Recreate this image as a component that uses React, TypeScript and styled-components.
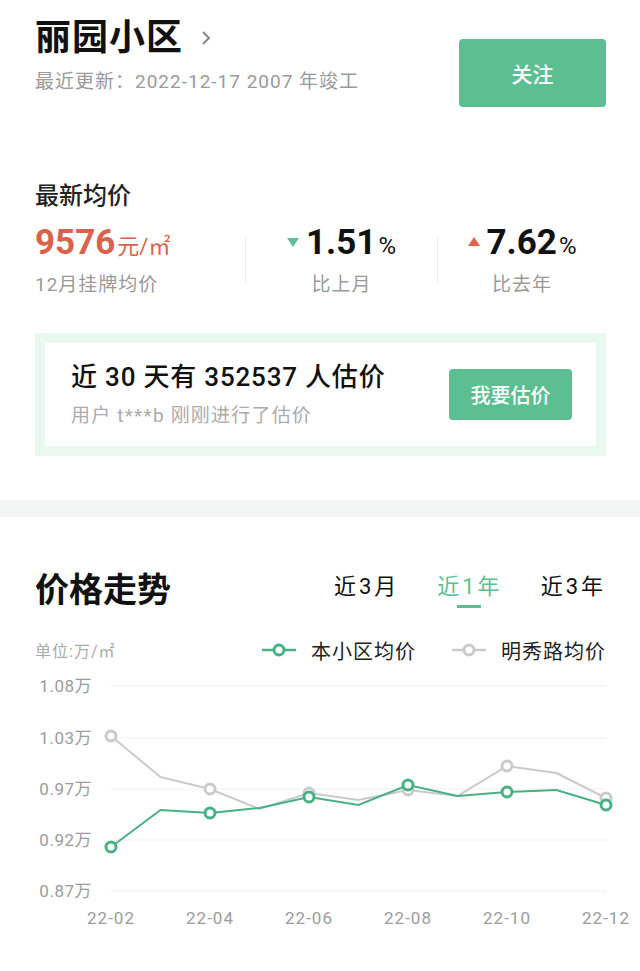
import React from 'react';
import styled, { createGlobalStyle } from 'styled-components';

const GlobalStyle = createGlobalStyle`
    * { box-sizing: border-box; }
    body {
        margin: 0;
        background: #fff;
        font-family: "Roboto", "Noto Sans CJK SC", sans-serif;
        color: #222;
    }
`;

const GREEN = '#5cbf91';
const LINE_GREEN = '#47b183';
const GRAY = '#cacaca';

const Page = styled.div`
    width: 640px;
`;

const TopSection = styled.section`
    padding: 16px 34px 44px 35px;
`;

const HeaderRow = styled.div`
    display: flex;
    justify-content: space-between;
    align-items: flex-start;
`;

const TitleRow = styled.div`
    display: flex;
    align-items: center;
    gap: 18px;
`;

const Title = styled.h1`
    margin: 0;
    font-size: 36px;
    line-height: 44px;
    font-weight: 700;
    color: #111;
    letter-spacing: 1px;
`;

const Updated = styled.div`
    margin-top: 9px;
    font-size: 19px;
    line-height: 26px;
    letter-spacing: 1px;
    color: #9a9a9a;
`;

const FollowButton = styled.button`
    margin-top: 23px;
    width: 147px;
    height: 68px;
    border: none;
    border-radius: 4px;
    background: ${GREEN};
    color: #fff;
    font-family: inherit;
    font-size: 21px;
    font-weight: 500;
`;

const SectionLabel = styled.h2`
    margin: 73px 0 0;
    font-size: 24px;
    line-height: 32px;
    font-weight: 500;
    color: #222;
`;

const StatsRow = styled.div`
    display: flex;
    align-items: center;
    margin-top: 9px;
`;

const Stat = styled.div<{ $width?: number; $center?: boolean }>`
    display: flex;
    flex-direction: column;
    align-items: ${p => (p.$center ? 'center' : 'flex-start')};
    ${p => (p.$width ? `width: ${p.$width}px;` : 'flex: 1;')}
`;

const StatValue = styled.div<{ $color?: string }>`
    display: flex;
    align-items: baseline;
    height: 44px;
    font-size: 35px;
    line-height: 44px;
    font-weight: 700;
    color: ${p => p.$color || '#111'};
`;

const Unit = styled.span<{ $size?: number }>`
    font-size: ${p => p.$size || 22}px;
    font-weight: 400;
    margin-left: 2px;
`;

const StatLabel = styled.div`
    margin-top: 7px;
    font-size: 19px;
    line-height: 26px;
    letter-spacing: 1px;
    color: #9a9a9a;
`;

const Divider = styled.div`
    width: 1px;
    height: 46px;
    background: #eeeeee;
`;

const Triangle = styled.span<{ $up?: boolean }>`
    align-self: center;
    width: 0;
    height: 0;
    margin-right: 7px;
    border-left: 6px solid transparent;
    border-right: 6px solid transparent;
    ${p =>
        p.$up
            ? 'border-bottom: 9px solid #e0654f; margin-top: -4px;'
            : 'border-top: 9px solid #5cc09c; margin-top: -2px;'}
`;

const EstimateCard = styled.div`
    margin-top: 35px;
    height: 123px;
    border: 10px solid #eaf8f2;
    display: flex;
    align-items: center;
    justify-content: space-between;
    padding: 0 24px 0 26px;
`;

const CardTitle = styled.div`
    font-size: 26px;
    line-height: 34px;
    font-weight: 500;
    letter-spacing: 0.8px;
    color: #111;
`;

const CardSub = styled.div`
    margin-top: 9px;
    font-size: 19px;
    line-height: 26px;
    letter-spacing: 1.2px;
    color: #ababab;
`;

const EstimateButton = styled.button`
    width: 123px;
    height: 51px;
    border: none;
    border-radius: 4px;
    background: ${GREEN};
    color: #fff;
    font-family: inherit;
    font-size: 20px;
    font-weight: 500;
`;

const Band = styled.div`
    height: 17px;
    background: #f4f5f5;
`;

const ChartSection = styled.section`
    padding-top: 51px;
`;

const ChartHeader = styled.div`
    display: flex;
    justify-content: space-between;
    align-items: center;
    padding: 0 34px 0 35px;
`;

const ChartTitle = styled.h2`
    margin: 0;
    font-size: 34px;
    line-height: 44px;
    font-weight: 700;
    color: #111;
`;

const Tabs = styled.div`
    display: flex;
    gap: 38px;
    margin-top: -6px;
`;

const Tab = styled.span<{ $active?: boolean }>`
    position: relative;
    font-size: 22px;
    line-height: 30px;
    letter-spacing: 3px;
    color: ${p => (p.$active ? GREEN : '#111')};

    &::after {
        content: '';
        display: ${p => (p.$active ? 'block' : 'none')};
        position: absolute;
        left: 50%;
        bottom: -6px;
        width: 24px;
        height: 3px;
        margin-left: -13px;
        background: ${GREEN};
    }
`;

const LegendRow = styled.div`
    display: flex;
    justify-content: space-between;
    align-items: center;
    margin-top: 24px;
    padding: 0 34px 0 35px;
    height: 28px;
`;

const UnitText = styled.span`
    font-size: 16px;
    letter-spacing: 1px;
    color: #ababab;
`;

const Legend = styled.div`
    display: flex;
    align-items: center;
    gap: 36px;
`;

const LegendItem = styled.div`
    display: flex;
    align-items: center;
    gap: 15px;
    font-size: 20px;
    letter-spacing: 1px;
    color: #222;
`;

const ChartSvg = styled.svg`
    display: block;
    width: 640px;
    height: 307px;
`;

const LegendIcon = ({ color }: { color: string }) => (
    <svg width="34" height="14" viewBox="0 0 34 14">
        <line x1="0" y1="7" x2="34" y2="7" stroke={color} strokeWidth="2.5" />
        <circle cx="17" cy="7" r="5" fill="#fff" stroke={color} strokeWidth="3" />
    </svg>
);

const Chevron = () => (
    <svg width="10" height="16" viewBox="0 0 10 16">
        <polyline points="2,2 8,8 2,14" fill="none" stroke="#888" strokeWidth="2" />
    </svg>
);

// page y minus 664 (chart top)
const OFFSET = 664;
const gridRows = [
    { label: '1.08万', y: 686 },
    { label: '1.03万', y: 738 },
    { label: '0.97万', y: 789 },
    { label: '0.92万', y: 840 },
    { label: '0.87万', y: 891 },
];
const xLabels = ['22-02', '22-04', '22-06', '22-08', '22-10', '22-12'];
const greenSeries = [847, 810, 813, 808, 797, 805, 785, 796, 792, 790, 805];
const graySeries = [736, 777, 789, 809, 793, 800, 790, 796, 766, 773, 798];

const xAt = (i: number) => 111 + i * 49.5;

const Series = ({ data, color }: { data: number[]; color: string }) => (
    <g>
        <polyline
            points={data.map((y, i) => `${xAt(i)},${y - OFFSET}`).join(' ')}
            fill="none"
            stroke={color}
            strokeWidth="2"
        />
        {data.map((y, i) =>
            i % 2 === 0 ? (
                <circle key={i} cx={xAt(i)} cy={y - OFFSET} r="5" fill="#fff" stroke={color} strokeWidth="3" />
            ) : null
        )}
    </g>
);

const PriceChart = () => (
    <ChartSvg viewBox="0 0 640 307">
        {gridRows.map(r => (
            <g key={r.label}>
                <line x1="111" x2="606" y1={r.y - OFFSET} y2={r.y - OFFSET} stroke="#f1f1f1" strokeWidth="1" />
                <text
                    x="92"
                    y={r.y - OFFSET}
                    textAnchor="end"
                    dominantBaseline="central"
                    fontSize="17"
                    letterSpacing="0.5"
                    fill="#9c9c9c"
                >
                    {r.label}
                </text>
            </g>
        ))}
        {xLabels.map((l, i) => (
            <text
                key={l}
                x={xAt(i * 2)}
                y={918 - OFFSET}
                textAnchor="middle"
                dominantBaseline="central"
                fontSize="17"
                letterSpacing="1"
                fill="#9c9c9c"
            >
                {l}
            </text>
        ))}
        <Series data={graySeries} color={GRAY} />
        <Series data={greenSeries} color={LINE_GREEN} />
    </ChartSvg>
);

const App: React.FC = () => {
    return (
        <Page>
            <GlobalStyle />
            <TopSection>
                <HeaderRow>
                    <div>
                        <TitleRow>
                            <Title>丽园小区</Title>
                            <Chevron />
                        </TitleRow>
                        <Updated>最近更新：2022-12-17 2007 年竣工</Updated>
                    </div>
                    <FollowButton>关注</FollowButton>
                </HeaderRow>

                <SectionLabel>最新均价</SectionLabel>
                <StatsRow>
                    <Stat $width={210}>
                        <StatValue $color="#d9624c">
                            9576<Unit>元/㎡</Unit>
                        </StatValue>
                        <StatLabel>12月挂牌均价</StatLabel>
                    </Stat>
                    <Divider />
                    <Stat $width={191} $center>
                        <StatValue>
                            <Triangle />
                            1.51<Unit $size={24}>%</Unit>
                        </StatValue>
                        <StatLabel>比上月</StatLabel>
                    </Stat>
                    <Divider />
                    <Stat $center>
                        <StatValue>
                            <Triangle $up />
                            7.62<Unit $size={24}>%</Unit>
                        </StatValue>
                        <StatLabel>比去年</StatLabel>
                    </Stat>
                </StatsRow>

                <EstimateCard>
                    <div>
                        <CardTitle>近 30 天有 352537 人估价</CardTitle>
                        <CardSub>用户 t***b 刚刚进行了估价</CardSub>
                    </div>
                    <EstimateButton>我要估价</EstimateButton>
                </EstimateCard>
            </TopSection>

            <Band />

            <ChartSection>
                <ChartHeader>
                    <ChartTitle>价格走势</ChartTitle>
                    <Tabs>
                        <Tab>近3月</Tab>
                        <Tab $active>近1年</Tab>
                        <Tab>近3年</Tab>
                    </Tabs>
                </ChartHeader>
                <LegendRow>
                    <UnitText>单位:万/㎡</UnitText>
                    <Legend>
                        <LegendItem>
                            <LegendIcon color={LINE_GREEN} />
                            本小区均价
                        </LegendItem>
                        <LegendItem>
                            <LegendIcon color={GRAY} />
                            明秀路均价
                        </LegendItem>
                    </Legend>
                </LegendRow>
                <PriceChart />
            </ChartSection>
        </Page>
    );
};

export default App;
